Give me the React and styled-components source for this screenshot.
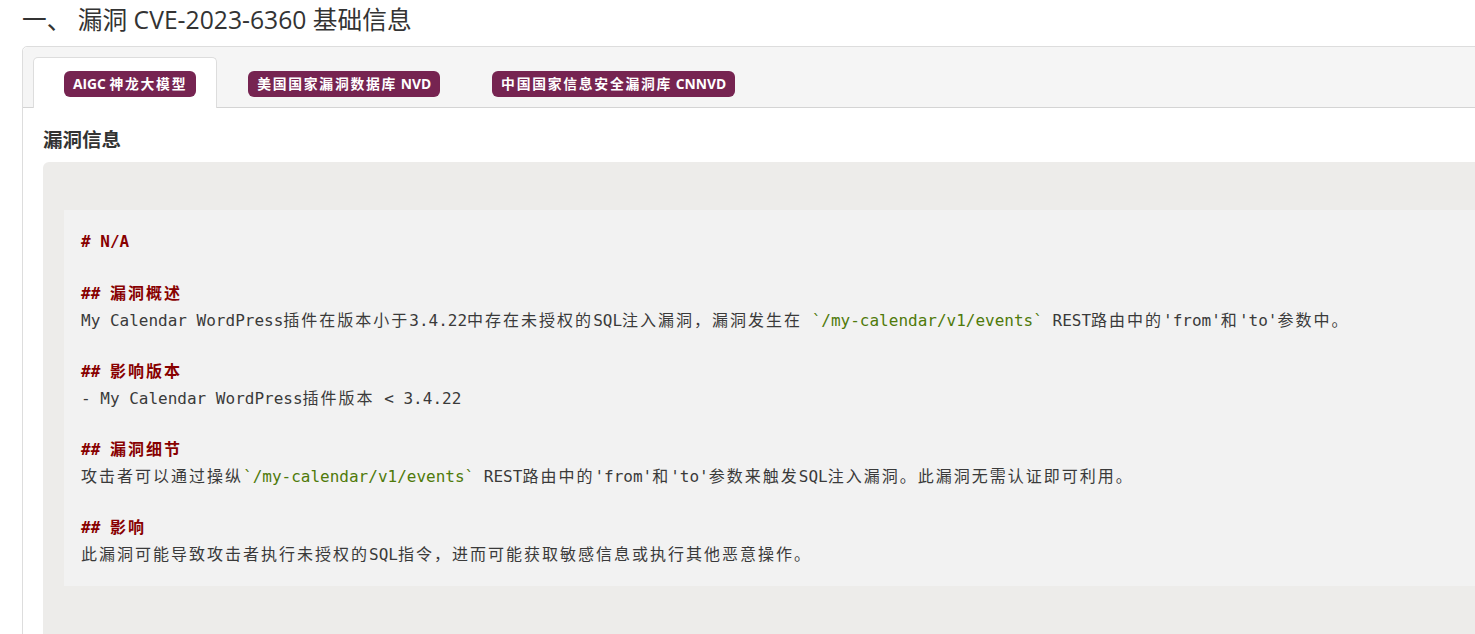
import React from "react";
import styled, { createGlobalStyle } from "styled-components";

const Global = createGlobalStyle`
  html, body { margin: 0; padding: 0; background: #fff; overflow: hidden; }
  body { font-family: "Open Sans", "Noto Sans CJK SC", sans-serif; color: #333; }
`;

const Page = styled.div`
  padding: 0 0 0 22px;
  width: 1600px;
`;

const Title = styled.h1`
  margin: 0;
  font-size: 24.7px;
  font-weight: 400;
  line-height: 40px;
  color: #333;
  font-family: "Open Sans", "Noto Sans CJK SC", sans-serif;
`;

const Panel = styled.div`
  margin-top: 6px;
  border: 1px solid #ddd;
  border-radius: 5px;
  background: #fff;
`;

const TabNav = styled.div`
  display: flex;
  background: #f5f5f5;
  padding: 10px 10px 0;
  border-bottom: 1px solid #d4d4d4;
  border-radius: 5px 5px 0 0;
`;

const Tab = styled.div`
  height: 50px;
  box-sizing: border-box;
  padding: 13px 20px 0 30px;
  margin-bottom: -1px;
  border: 1px solid ${(p) => (p.$active ? "#ddd" : "transparent")};
  border-bottom: none;
  border-radius: 5px 5px 0 0;
  background: ${(p) => (p.$active ? "#fff" : "transparent")};
  ${(p) => p.$active && "height: 51px;"}
`;

const Badge = styled.span`
  display: inline-block;
  height: 26px;
  line-height: 26px;
  padding: 0 9px;
  border-radius: 6px;
  background: #762451;
  color: #fff;
  font-weight: 700;
  font-size: 13.8px;
  white-space: nowrap;
  font-family: "Open Sans", "Noto Sans CJK SC", sans-serif;
`;

const BadgeCjk = styled.span`
  letter-spacing: 1.75px;
`;

const Content = styled.div`
  padding: 18px 0 0 20px;
`;

const SectionTitle = styled.h2`
  margin: 0 0 8px;
  font-size: 19.5px;
  line-height: 28px;
  font-weight: 700;
  color: #333;
  font-family: "Open Sans", "Noto Sans CJK SC", sans-serif;
`;

const InfoBox = styled.div`
  background: #edecea;
  border-radius: 6px;
  padding: 48px 0 60px 21px;
`;

const Pre = styled.div`
  background: #f2f2f2;
  padding: 18px 17px 20px;
  font-family: "DejaVu Sans Mono", "Noto Sans CJK SC", monospace;
  font-size: 16px;
  line-height: 26px;
  color: #3a3a3a;
  white-space: pre;
`;

const Line = styled.div`
  height: 26px;
  color: ${(p) => (p.$heading ? "#880000" : "#3a3a3a")};
  font-weight: ${(p) => (p.$heading ? 700 : 400)};
  ${(p) => p.$lift && "margin-top: -1px; margin-bottom: 1px;"}
  ${(p) => p.$drop && "margin-top: 1px; margin-bottom: -1px;"}
`;

const Code = styled.span`
  color: #4f7a0a;
`;

const Cjk = styled.span`
  font-family: "Noto Sans CJK SC", sans-serif;
  letter-spacing: 2px;
`;

const CJK_RE = /([\u3000-\u303f\u4e00-\u9fff\uff00-\uffef]+)/;

function Txt({ children, as: Wrap = Cjk }) {
  const parts = String(children).split(CJK_RE);
  return parts.map((s, i) =>
    i % 2 === 1 ? <Wrap key={i}>{s}</Wrap> : <React.Fragment key={i}>{s}</React.Fragment>
  );
}

const lines = [
  { h: true, drop: true, t: "# N/A" },
  { t: "" },
  { h: true, lift: true, t: "## 漏洞概述" },
  {
    t: [
      "My Calendar WordPress插件在版本小于3.4.22中存在未授权的SQL注入漏洞，漏洞发生在 ",
      { c: "`/my-calendar/v1/events`" },
      " REST路由中的'from'和'to'参数中。",
    ],
  },
  { t: "" },
  { h: true, lift: true, t: "## 影响版本" },
  { t: "- My Calendar WordPress插件版本 < 3.4.22" },
  { t: "" },
  { h: true, lift: true, t: "## 漏洞细节" },
  {
    t: [
      "攻击者可以通过操纵",
      { c: "`/my-calendar/v1/events`" },
      " REST路由中的'from'和'to'参数来触发SQL注入漏洞。此漏洞无需认证即可利用。",
    ],
  },
  { t: "" },
  { h: true, lift: true, t: "## 影响" },
  { t: "此漏洞可能导致攻击者执行未授权的SQL指令，进而可能获取敏感信息或执行其他恶意操作。" },
];

const tabs = ["AIGC 神龙大模型", "美国国家漏洞数据库 NVD", "中国国家信息安全漏洞库 CNNVD"];

export default function App() {
  return (
    <Page>
      <Global />
      <Title>
        <Txt as={React.Fragment}>{"一、 漏洞 CVE-2023-6360 基础信息"}</Txt>
      </Title>
      <Panel>
        <TabNav>
          {tabs.map((t, i) => (
            <Tab key={t} $active={i === 0}>
              <Badge>
                <Txt as={BadgeCjk}>{t}</Txt>
              </Badge>
            </Tab>
          ))}
        </TabNav>
        <Content>
          <SectionTitle>漏洞信息</SectionTitle>
          <InfoBox>
            <Pre>
              {lines.map((l, i) => (
                <Line key={i} $heading={l.h} $lift={l.lift} $drop={l.drop}>
                  {Array.isArray(l.t)
                    ? l.t.map((seg, j) =>
                        typeof seg === "string" ? (
                          <Txt key={j}>{seg}</Txt>
                        ) : (
                          <Code key={j}>{seg.c}</Code>
                        )
                      )
                    : <Txt>{l.t}</Txt>}
                </Line>
              ))}
            </Pre>
          </InfoBox>
        </Content>
      </Panel>
    </Page>
  );
}
